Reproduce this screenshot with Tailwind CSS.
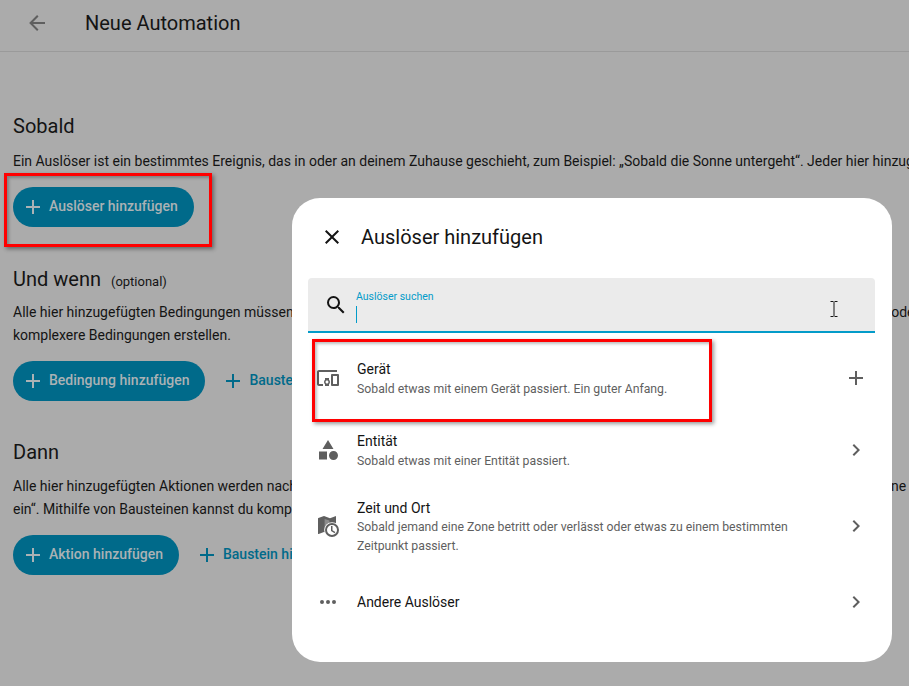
<!DOCTYPE html>
<html lang="de">
  <head>
    <meta charset="UTF-8" />
    <meta name="viewport" content="width=device-width, initial-scale=1.0" />
    <title>Neue Automation</title>
    <script src="https://cdn.jsdelivr.net/npm/@tailwindcss/browser@4"></script>
  </head>
  <body class="relative h-[686px] w-[909px] overflow-hidden bg-[#ababab] font-['Roboto',sans-serif] text-[#141414]">
    <!-- Header -->
    <header class="flex h-[52px] items-center border-b border-[#9a9a9a] pb-[5px]">
      <svg class="ml-[25px] h-6 w-6 fill-[#5f5f5f]" viewBox="0 0 24 24"><path d="M20,11V13H8L13.5,18.5L12.08,19.92L4.16,12L12.08,4.08L13.5,5.5L8,11H20Z" /></svg>
      <h1 class="ml-[36px] text-[20px] leading-6">Neue Automation</h1>
    </header>

    <!-- Page content, runs on behind the dialog -->
    <main class="whitespace-nowrap pl-[13px] pt-[62px] text-[14px] leading-[23px]">
      <h2 class="text-[20px] leading-6">Sobald</h2>
      <p class="mt-[12px]">Ein Auslöser ist ein bestimmtes Ereignis, das in oder an deinem Zuhause geschieht, zum Beispiel: „Sobald die Sonne untergeht“. Jeder hier hinzugefügte Auslöser startet die Automation.</p>
      <button class="mt-[14px] flex h-10 items-center rounded-full bg-[#006a8a] pl-[8px] pr-[16px] text-[14px] font-medium text-[#abb2b5]">
        <svg class="h-6 w-6 fill-[#abb2b5]" viewBox="0 0 24 24"><path d="M19,13H13V19H11V13H5V11H11V5H13V11H19V13Z" /></svg>
        <span class="ml-[4px] -mt-[1px]">Auslöser hinzufügen</span>
      </button>

      <h2 class="mt-[40px] text-[20px] leading-6">Und wenn <span class="ml-[5px] text-[13px]">(optional)</span></h2>
      <p class="mt-[7px]">Alle hier hinzugefügten Bedingungen müssen erfüllt sein, damit die Automation <span class="ml-[22px]">ausgeführt</span> wird, nachdem sie ausgelöst wurde. Du kannst oder</p>
      <p>komplexere Bedingungen erstellen.</p>
      <div class="mt-[14px] flex items-center">
        <button class="flex h-10 items-center rounded-full bg-[#006a8a] pl-[8px] pr-[16px] text-[14px] font-medium text-[#abb2b5]">
          <svg class="h-6 w-6 fill-[#abb2b5]" viewBox="0 0 24 24"><path d="M19,13H13V19H11V13H5V11H11V5H13V11H19V13Z" /></svg>
          <span class="ml-[4px] -mt-[1px]">Bedingung hinzufügen</span>
        </button>
        <button class="ml-[16px] flex h-10 items-center text-[14px] font-medium text-[#006a8a]">
          <svg class="h-6 w-6 fill-[#006a8a]" viewBox="0 0 24 24"><path d="M19,13H13V19H11V13H5V11H11V5H13V11H19V13Z" /></svg>
          <span class="ml-[4px] -mt-[1px]">Baustein hinzufügen</span>
        </button>
      </div>

      <h2 class="mt-[39px] text-[20px] leading-6">Dann</h2>
      <p class="mt-[11px]">Alle hier hinzugefügten Aktionen werden nacheinander ausgeführt, sobald Automation <span class="ml-[11px]">ausgelöst</span> wurde: „Schalte das Licht im Wohnzimmer ne</p>
      <p>ein“. Mithilfe von Bausteinen kannst du komplexere Aktionen erstellen.</p>
      <div class="mt-[14px] flex items-center">
        <button class="flex h-10 items-center rounded-full bg-[#006a8a] pl-[8px] pr-[16px] text-[14px] font-medium text-[#abb2b5]">
          <svg class="h-6 w-6 fill-[#abb2b5]" viewBox="0 0 24 24"><path d="M19,13H13V19H11V13H5V11H11V5H13V11H19V13Z" /></svg>
          <span class="ml-[4px] -mt-[1px]">Aktion hinzufügen</span>
        </button>
        <button class="ml-[16px] flex h-10 items-center text-[14px] font-medium text-[#006a8a]">
          <svg class="h-6 w-6 fill-[#006a8a]" viewBox="0 0 24 24"><path d="M19,13H13V19H11V13H5V11H11V5H13V11H19V13Z" /></svg>
          <span class="ml-[4px] -mt-[1px]">Baustein hinzufügen</span>
        </button>
      </div>
    </main>

    <!-- Dialog -->
    <section class="absolute left-[292px] top-[198px] h-[464px] w-[600px] rounded-[28px] bg-white">
      <div class="flex h-[80px] items-center pb-[2px] pl-[28px]">
        <svg class="h-6 w-6 fill-[#141414]" viewBox="0 0 24 24"><path d="M19,6.41L17.59,5L12,10.59L6.41,5L5,6.41L10.59,12L5,17.59L6.41,19L12,13.41L17.59,19L19,17.59L13.41,12L19,6.41Z" /></svg>
        <h2 class="ml-[17px] -mt-[1px] text-[20px] leading-6">Auslöser hinzufügen</h2>
      </div>

      <div class="ml-4 mr-[17px] flex h-[55px] items-center rounded-t-[4px] border-b-2 border-[#039bc9] bg-[#ebebeb] pl-[16px]">
        <svg class="h-6 w-6 fill-[#141414]" viewBox="0 0 24 24"><path d="M9.5,3A6.5,6.5 0 0,1 16,9.5C16,11.11 15.41,12.59 14.44,13.73L14.71,14H15.5L20.5,19L19,20.5L14,15.5V14.71L13.73,14.44C12.59,15.41 11.11,16 9.5,16A6.5,6.5 0 0,1 3,9.5A6.5,6.5 0 0,1 9.5,3M9.5,5C7,5 5,7 5,9.5C5,12 7,14 9.5,14C12,14 14,12 14,9.5C14,7 12,5 9.5,5Z" /></svg>
        <div class="ml-[8px] flex h-full flex-col pt-[12px]">
          <span class="text-[10.5px] leading-[14px] text-[#039bc9]">Auslöser suchen</span>
          <span class="mt-[2px] h-[17px] w-px bg-[#039bc9]"></span>
        </div>
        <!-- text cursor -->
        <svg class="ml-auto mr-[37px] mt-[9px] h-4 w-2 stroke-[#141414]" viewBox="0 0 8 16" fill="none"><path d="M0.5 0.5H3.5M4.5 0.5H7.5M4 1V15M0.5 15.5H3.5M4.5 15.5H7.5" /></svg>
      </div>

      <ul class="text-[14px]">
        <li class="flex h-[81px] items-center pl-[24px] pr-[24px] pt-[9px]">
          <svg class="h-6 w-6 fill-[#5f5f5f]" viewBox="0 0 24 24"><path d="M3 6H21V4H3C1.9 4 1 4.9 1 6V18C1 19.1 1.9 20 3 20H7V18H3V6M13 12H9V13.78C8.39 14.33 8 15.11 8 16C8 16.89 8.39 17.67 9 18.22V20H13V18.22C13.61 17.67 14 16.88 14 16S13.61 14.33 13 13.78V12M11 17.5C10.17 17.5 9.5 16.83 9.5 16S10.17 14.5 11 14.5 12.5 15.17 12.5 16 11.83 17.5 11 17.5M22 8H16C15.5 8 15 8.5 15 9V19C15 19.5 15.5 20 16 20H22C22.5 20 23 19.5 23 19V9C23 8.5 22.5 8 22 8M21 18H17V10H21V18Z" /></svg>
          <div class="ml-[17px] flex-1">
            <div class="leading-5">Gerät</div>
            <div class="translate-y-px text-[12.25px] leading-[18px] text-[#5f5f5f]">Sobald etwas mit einem Gerät passiert. Ein guter Anfang.</div>
          </div>
          <svg class="h-6 w-6 fill-[#5f5f5f]" viewBox="0 0 24 24"><path d="M19,13H13V19H11V13H5V11H11V5H13V11H19V13Z" /></svg>
        </li>
        <li class="flex h-[72px] items-center pl-[24px] pr-[24px]">
          <svg class="h-6 w-6 fill-[#5f5f5f]" viewBox="0 0 24 24"><path d="M11,13.5V21.5H3V13.5H11M12,2L17.5,11H6.5L12,2M17.5,13C20,13 22,15 22,17.5C22,20 20,22 17.5,22C15,22 13,20 13,17.5C13,15 15,13 17.5,13Z" /></svg>
          <div class="ml-[17px] flex-1">
            <div class="leading-5">Entität</div>
            <div class="translate-y-px text-[12.25px] leading-[18px] text-[#5f5f5f]">Sobald etwas mit einer Entität passiert.</div>
          </div>
          <svg class="h-6 w-6 fill-[#5f5f5f]" viewBox="0 0 24 24"><path d="M8.59,16.58L13.17,12L8.59,7.41L10,6L16,12L10,18L8.59,16.58Z" /></svg>
        </li>
        <li class="flex h-[80px] items-center pl-[24px] pr-[24px]">
          <svg class="h-6 w-6" viewBox="0 0 24 24">
            <path class="fill-[#5f5f5f]" d="M2.36,4L8,2.1L14,4.2L19.34,2.13L19.5,2.1A0.5,0.5 0 0,1 20,2.6V12H12V19L8,18L2.66,20.07L2.5,20.1A0.5,0.5 0 0,1 2,19.6V4.48C2,4.25 2.15,4.07 2.36,4Z" />
            <path class="fill-[#8c8c8c]" d="M8.6,5V16.5L13.4,18V6.6Z" />
            <circle class="fill-white" cx="16" cy="16" r="7.8" />
            <path class="fill-[#5f5f5f]" d="M15,12H16.5V16.25L19.36,17.94L18.61,19.16L15,17V12M16,9A7,7 0 0,1 23,16A7,7 0 0,1 16,23A7,7 0 0,1 9,16A7,7 0 0,1 16,9M16,11A5,5 0 0,0 11,16A5,5 0 0,0 16,21A5,5 0 0,0 21,16A5,5 0 0,0 16,11Z" />
          </svg>
          <div class="ml-[17px] flex-1 translate-y-px">
            <div class="leading-5">Zeit und Ort</div>
            <div class="w-[450px] text-[12.25px] leading-[19px] text-[#5f5f5f]">Sobald jemand eine Zone betritt oder verlässt oder etwas zu einem bestimmten Zeitpunkt passiert.</div>
          </div>
          <svg class="h-6 w-6 fill-[#5f5f5f]" viewBox="0 0 24 24"><path d="M8.59,16.58L13.17,12L8.59,7.41L10,6L16,12L10,18L8.59,16.58Z" /></svg>
        </li>
        <li class="flex h-[72px] items-center pl-[24px] pr-[24px]">
          <svg class="h-6 w-6 fill-[#5f5f5f]" viewBox="0 0 24 24"><path d="M16,12A2,2 0 0,1 18,10A2,2 0 0,1 20,12A2,2 0 0,1 18,14A2,2 0 0,1 16,12M10,12A2,2 0 0,1 12,10A2,2 0 0,1 14,12A2,2 0 0,1 12,14A2,2 0 0,1 10,12M4,12A2,2 0 0,1 6,10A2,2 0 0,1 8,12A2,2 0 0,1 6,14A2,2 0 0,1 4,12Z" /></svg>
          <div class="ml-[17px] flex-1 leading-5">Andere Auslöser</div>
          <svg class="h-6 w-6 fill-[#5f5f5f]" viewBox="0 0 24 24"><path d="M8.59,16.58L13.17,12L8.59,7.41L10,6L16,12L10,18L8.59,16.58Z" /></svg>
        </li>
      </ul>
    </section>

    <!-- Red annotation frames -->
    <div class="absolute left-[4px] top-[173px] h-[74px] w-[208px] border-[3px] border-[#ff0000] shadow-[2px_2px_4px_rgba(0,0,0,0.4),inset_2px_2px_3px_rgba(0,0,0,0.25)]"></div>
    <div class="absolute left-[312px] top-[339px] h-[83px] w-[400px] border-[3px] border-[#ff0000] shadow-[2px_2px_4px_rgba(0,0,0,0.4),inset_2px_2px_3px_rgba(0,0,0,0.25)]"></div>
  </body>
</html>
